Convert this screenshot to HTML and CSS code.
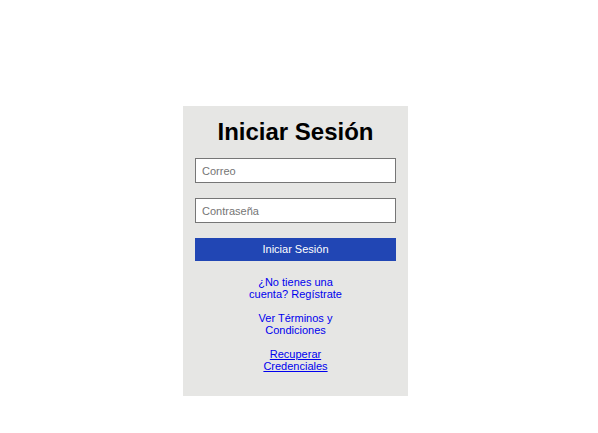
FILE: index.html
```html
<!DOCTYPE html>
<html lang="es">
<head>
<meta charset="utf-8">
<title>Iniciar Sesión</title>
<link rel="stylesheet" href="styles.css">
</head>
<body>
<main class="page">
  <form class="card">
    <h1 class="title">Iniciar Sesión</h1>
    <input class="field" type="email" placeholder="Correo">
    <input class="field" type="password" placeholder="Contraseña">
    <button class="submit" type="button">Iniciar Sesión</button>
    <div class="links">
      <a class="link" href="#">¿No tienes una cuenta? Regístrate</a>
      <a class="link" href="#">Ver Términos y Condiciones</a>
      <a class="link link-underline" href="#">Recuperar Credenciales</a>
    </div>
  </form>
</main>
</body>
</html>
```

FILE: styles.css
```css
html, body {
  margin: 0;
  padding: 0;
  background: #ffffff;
  font-family: "Liberation Sans", Arial, sans-serif;
}

.page {
  display: flex;
  justify-content: center;
  padding-top: 106px;
  padding-right: 7px;
}

.card {
  width: 225px;
  box-sizing: border-box;
  background: #e6e6e4;
  padding: 12px 12px 13px;
  display: flex;
  flex-direction: column;
}

.title {
  margin: 0 0 12px;
  font-size: 24px;
  font-weight: bold;
  text-align: center;
  color: #000;
  line-height: normal;
}

.field {
  height: 25px;
  box-sizing: border-box;
  margin: 0 0 15px;
  border: 1px solid #767676;
  background: #fff;
  padding: 0 6px;
  font-family: "Liberation Sans", Arial, sans-serif;
  font-size: 11px;
  color: #000;
  outline: none;
}

.field::placeholder {
  color: #757575;
}

.submit {
  height: 23px;
  margin: 0;
  border: none;
  background: #2146b4;
  color: #fff;
  font-family: "Liberation Sans", Arial, sans-serif;
  font-size: 11px;
  padding: 0 0 1px;
}

.links {
  width: 100px;
  align-self: center;
  display: flex;
  flex-direction: column;
  gap: 12px;
  padding-top: 15px;
  padding-bottom: 11px;
  text-align: center;
}

.link {
  font-size: 11px;
  line-height: 12px;
  color: #0000ee;
  text-decoration: none;
}

.link-underline {
  text-decoration: underline;
}
```
